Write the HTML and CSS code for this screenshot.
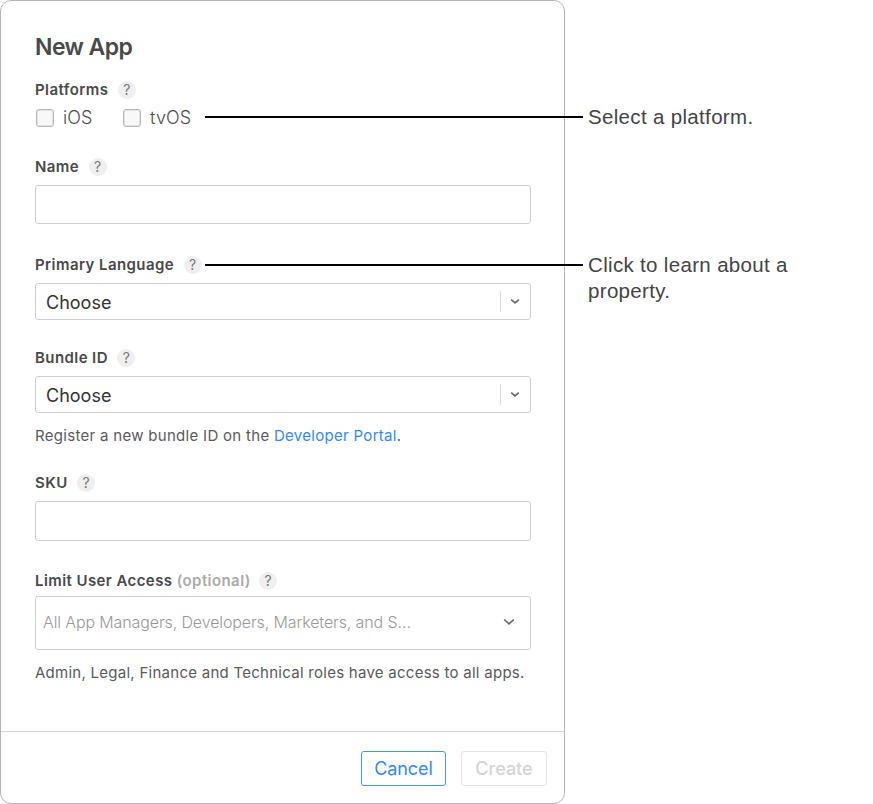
FILE: index.html
```html
<!DOCTYPE html>
<html lang="en">
<head>
<meta charset="utf-8">
<title>New App</title>
<link rel="stylesheet" href="styles.css">
</head>
<body>
<div class="page">
  <form class="dialog">
    <div class="dialog-body">
      <h1 class="title">New App</h1>
      <div class="field platforms">
        <div class="label"><span>Platforms</span><i class="help">?</i></div>
        <div class="checks">
          <label class="check"><span class="box"></span><span>iOS</span></label>
          <label class="check"><span class="box"></span><span>tvOS</span></label>
        </div>
      </div>
      <div class="field name">
        <div class="label"><span>Name</span><i class="help">?</i></div>
        <div class="input"></div>
      </div>
      <div class="field language">
        <div class="label"><span>Primary Language</span><i class="help">?</i></div>
        <div class="select"><span class="choice">Choose</span><span class="arrow"><svg width="10" height="7" viewBox="0 0 10 7"><path d="M1.2 1.6 5 4.9 8.8 1.6"/></svg></span></div>
      </div>
      <div class="field bundle">
        <div class="label"><span>Bundle ID</span><i class="help">?</i></div>
        <div class="select"><span class="choice">Choose</span><span class="arrow"><svg width="10" height="7" viewBox="0 0 10 7"><path d="M1.2 1.6 5 4.9 8.8 1.6"/></svg></span></div>
        <p class="note">Register a new bundle ID on the <a class="link">Developer Portal</a>.</p>
      </div>
      <div class="field sku">
        <div class="label"><span>SKU</span><i class="help">?</i></div>
        <div class="input"></div>
      </div>
      <div class="field access">
        <div class="label"><span>Limit User Access <em class="optional">(optional)</em></span><i class="help">?</i></div>
        <div class="select large"><span class="placeholder">All App Managers, Developers, Marketers, and S…</span><svg width="12" height="8" viewBox="0 0 12 8"><path d="M1.2 1.5 6 5.9 10.8 1.5"/></svg></div>
        <p class="note roles">Admin, Legal, Finance and Technical roles have access to all apps.</p>
      </div>
    </div>
    <div class="footer">
      <button type="button" class="button cancel">Cancel</button>
      <button type="button" class="button create" disabled>Create</button>
    </div>
  </form>
  <aside class="callouts">
    <p class="callout">Select a platform.</p>
    <p class="callout second">Click to learn about a<br>property.</p>
  </aside>
  <div class="leader leader-platform"></div>
  <div class="leader leader-help"></div>
</div>
</body>
</html>
```
FILE: styles.css
```css
* { box-sizing: border-box; }
body { margin: 0; background: #fff; font-family: Inter, "Liberation Sans", sans-serif; color: #494949; }
.page { position: relative; display: flex; width: 873px; height: 804px; overflow: hidden; }
.dialog { display: flex; flex-direction: column; width: 565px; height: 804px; border: 1px solid #b5b5b5; border-radius: 11px; }
.dialog-body { flex: 1; padding: 31px 34px 0; }
.title { margin: 0; height: 30px; line-height: 30px; font-size: 23px; font-weight: 600; letter-spacing: -0.55px; white-space: nowrap; }
.field { width: 496px; }
.platforms { margin-top: 19px; }
.name { margin-top: 30px; }
.language { margin-top: 32px; }
.bundle { margin-top: 29px; }
.sku { margin-top: 28px; }
.access { margin-top: 31px; }
.label { display: flex; align-items: center; gap: 9.5px; height: 18px; font-size: 15px; font-weight: 600; line-height: 18px; letter-spacing: 0.42px; white-space: nowrap; }
.help { width: 18px; height: 18px; border-radius: 50%; background: #efefef; color: #777; font-size: 14px; font-weight: 400; font-style: normal; letter-spacing: 0; line-height: 18px; text-align: center; }
.access .help { margin-left: -1px; }
.optional { color: #aaa; font-style: normal; }
.checks { display: flex; gap: 29.5px; height: 20px; margin-top: 9px; }
.check { display: flex; align-items: center; gap: 9px; color: #4d4d4d; font-size: 18px; font-weight: 300; line-height: 20px; letter-spacing: 0.1px; }
.box { width: 18px; height: 18px; margin: -1px 0 0 1px; border: 1px solid #b8b8b8; border-radius: 3px; background: #f8f8f8; box-shadow: inset 0 0 0 1px #e3e3e3; }
.input { height: 39px; margin-top: 9px; border: 1px solid #cfcfcf; border-radius: 3px; }
.sku .input { height: 40px; }
.select { display: flex; align-items: center; justify-content: space-between; height: 37px; margin-top: 9px; padding-left: 10px; border: 1px solid #cfcfcf; border-radius: 3px; color: #333; font-size: 18px; }
.choice { padding-top: 2px; }
.arrow { display: flex; align-items: center; justify-content: center; width: 30px; height: 21px; padding-right: 2px; border-left: 1px solid #ddd; }
svg { display: block; fill: none; stroke: #666; stroke-width: 1.6; }
.large { height: 54px; margin-top: 6px; padding: 0 15px 2px 7px; }
.placeholder { color: #999; font-size: 16px; font-weight: 300; letter-spacing: -0.12px; white-space: nowrap; }
.note { height: 20px; margin: 13px 0 0; font-size: 15px; line-height: 20px; letter-spacing: 0.3px; white-space: nowrap; color: #5a5a5a; }
.roles { letter-spacing: 0.265px; }
.link { color: #3488f7; }
.footer { display: flex; justify-content: flex-end; gap: 15px; height: 72px; padding: 19px 17px 0 0; border-top: 1px solid #d8d8d8; }
.button { width: 86px; height: 35px; padding: 0; border: 1px solid #4795fa; border-radius: 3px; background: #fff; color: #3488f7; font: 400 18px/33px Inter, "Liberation Sans", sans-serif; }
.cancel { width: 85px; letter-spacing: -0.1px; }
.create { border-color: #e3e3e3; color: #d4d4d4; font-weight: 500; }
.callouts { padding: 104px 0 0 23px; color: #444; font: 20.5px/26px "Liberation Sans", Arial, sans-serif; letter-spacing: 0.33px; }
.callout { margin: 0; white-space: nowrap; }
.second { margin-top: 122px; }
.leader { position: absolute; left: 205px; width: 378px; height: 2px; background: #000; }
.leader-platform { top: 116px; }
.leader-help { top: 264px; }
```
